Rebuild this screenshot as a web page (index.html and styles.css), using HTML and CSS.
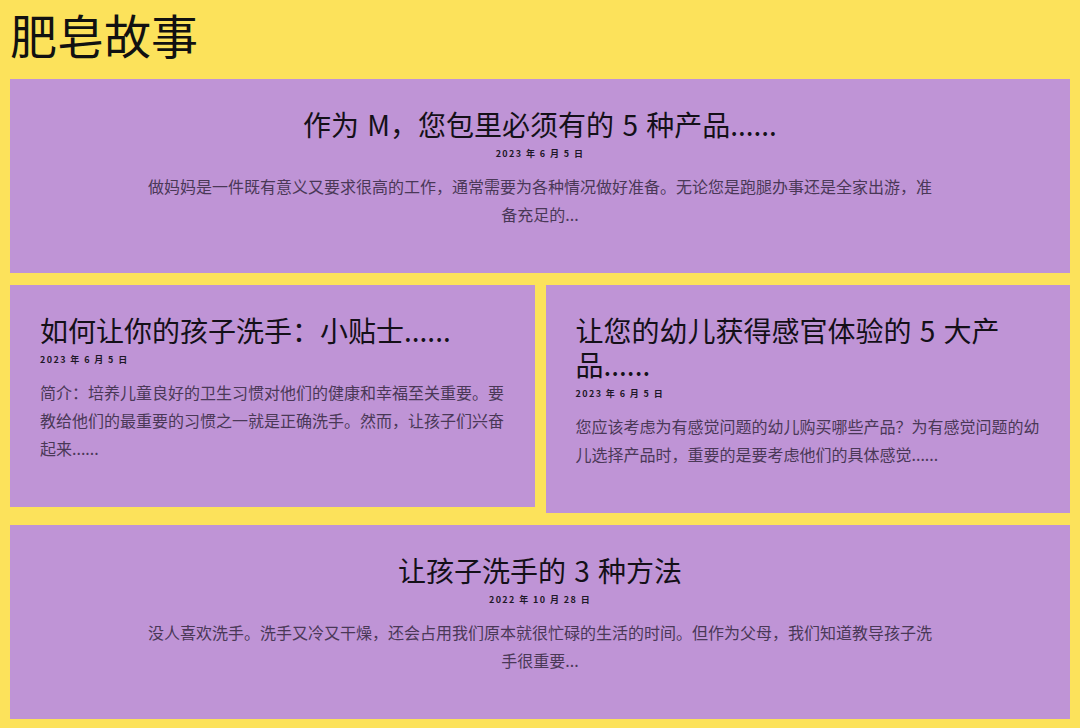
FILE: index.html
```html
<!DOCTYPE html>
<html lang="zh">
<head>
<meta charset="utf-8">
<title>肥皂故事</title>
<link rel="stylesheet" href="styles.css">
</head>
<body>
<h1 class="page-title">肥皂故事</h1>
<div class="grid">
  <article class="card card-wide">
    <h2 class="card-title">作为 M，您包里必须有的 5 种产品......</h2>
    <div class="card-date">2023 年 6 月 5 日</div>
    <p class="card-text">做妈妈是一件既有意义又要求很高的工作，通常需要为各种情况做好准备。无论您是跑腿办事还是全家出游，准备充足的...</p>
  </article>
  <article class="card">
    <h2 class="card-title">如何让你的孩子洗手：小贴士......</h2>
    <div class="card-date">2023 年 6 月 5 日</div>
    <p class="card-text">简介：培养儿童良好的卫生习惯对他们的健康和幸福至关重要。要教给他们的最重要的习惯之一就是正确洗手。然而，让孩子们兴奋起来......</p>
  </article>
  <article class="card">
    <h2 class="card-title">让您的幼儿获得感官体验的 5 大产品......</h2>
    <div class="card-date">2023 年 6 月 5 日</div>
    <p class="card-text">您应该考虑为有感觉问题的幼儿购买哪些产品？为有感觉问题的幼儿选择产品时，重要的是要考虑他们的具体感觉......</p>
  </article>
  <article class="card card-wide">
    <h2 class="card-title">让孩子洗手的 3 种方法</h2>
    <div class="card-date">2022 年 10 月 28 日</div>
    <p class="card-text">没人喜欢洗手。洗手又冷又干燥，还会占用我们原本就很忙碌的生活的时间。但作为父母，我们知道教导孩子洗手很重要...</p>
  </article>
</div>
</body>
</html>
```
FILE: styles.css
```css
html, body {
  margin: 0;
  padding: 0;
}
body {
  background: #fce25b;
  padding: 0 10px;
  font-family: "Noto Sans CJK SC", "DejaVu Sans", sans-serif;
  color: #111;
}
.page-title {
  margin: 0 0 11px;
  font-size: 47px;
  line-height: 68px;
  font-weight: 400;
}
.grid {
  display: grid;
  grid-template-columns: 1fr 1fr;
  column-gap: 11px;
  row-gap: 12px;
  align-items: start;
}
.card {
  background: #bf94d6;
  padding: 28px 30px 29px;
}
.card-wide {
  grid-column: 1 / -1;
  text-align: center;
}
.card-title {
  margin: 0 0 7px;
  font-size: 28px;
  line-height: 34px;
  font-weight: 400;
  word-spacing: 2px;
  color: #141018;
}
.card-date {
  font-size: 9px;
  line-height: 12px;
  font-weight: 700;
  letter-spacing: 1.4px;
  color: #1e1828;
}
.card-text {
  margin: 12px 0 16px;
  font-size: 16px;
  line-height: 28px;
  color: #4a3857;
}
.card-wide .card-text {
  max-width: 790px;
  margin-left: auto;
  margin-right: auto;
}
```
